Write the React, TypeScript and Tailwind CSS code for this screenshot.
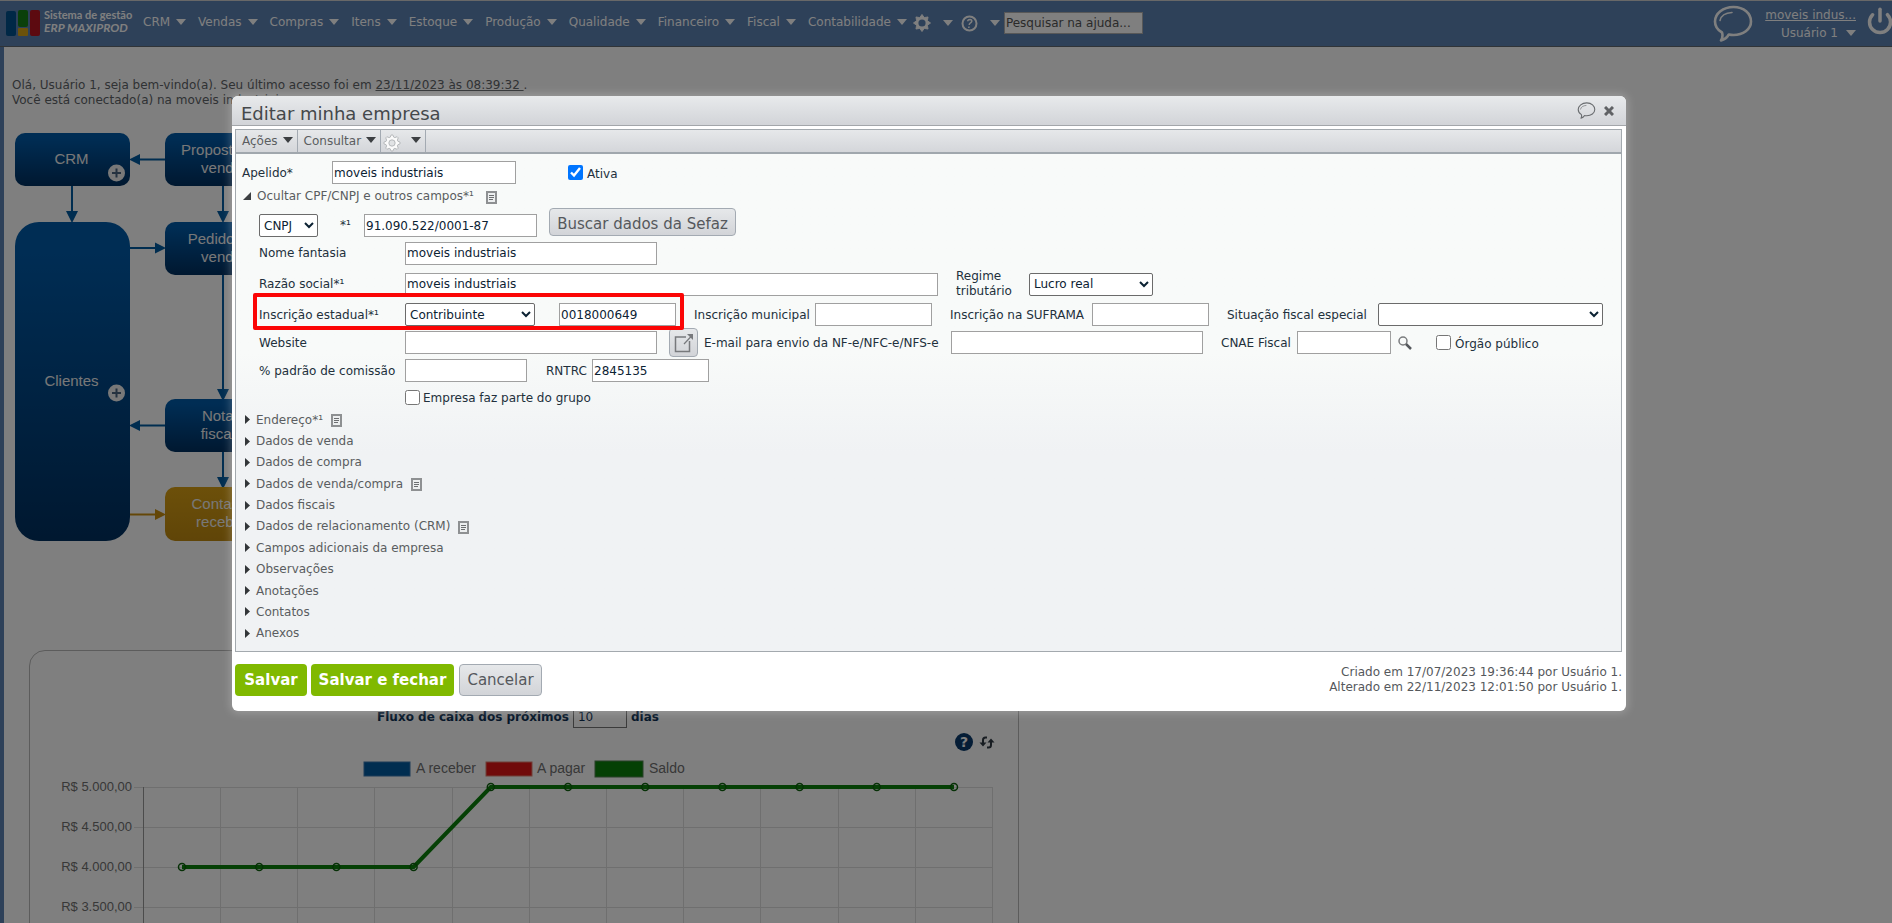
import type { ReactNode } from "react";
import { Power } from "lucide-react";

const menuItems = [
  "CRM",
  "Vendas",
  "Compras",
  "Itens",
  "Estoque",
  "Produção",
  "Qualidade",
  "Financeiro",
  "Fiscal",
  "Contabilidade",
];

const sections = [
  { title: "Endereço*¹", note: true },
  { title: "Dados de venda" },
  { title: "Dados de compra" },
  { title: "Dados de venda/compra", note: true },
  { title: "Dados fiscais" },
  { title: "Dados de relacionamento (CRM)", note: true },
  { title: "Campos adicionais da empresa" },
  { title: "Observações" },
  { title: "Anotações" },
  { title: "Contatos" },
  { title: "Anexos" },
];

const inputClass =
  "h-[23px] border border-[#a0a0a0] bg-white px-px text-xs text-[#0c2233] outline-none";
const selectClass =
  "h-[23px] rounded-xs border border-[#6b6b6b] bg-white text-xs text-[#0c2233]";
const grayButton =
  "rounded-sm border border-[#a3aab2] bg-linear-to-b from-[#e6e8ea] to-[#d2d4d8] text-[#55585c]";

const Caret = () => (
  <svg width="10" height="6" viewBox="0 0 10 6" fill="currentColor">
    <path d="M0 0h10L5 6z" />
  </svg>
);

const Bubble = ({ className, stroke }: { className: string; stroke: number }) => (
  <svg className={className} viewBox="0 0 40 37" fill="none" stroke="currentColor" strokeWidth={stroke} strokeLinejoin="round">
    <path d="M9 27.500C4.500 25 2 21 2 16.500C2 8.500 10 2 20.500 2S38 8.500 38 16.500S30 30 20.500 30C18.800 30 17.200 29.800 15.800 29.500C14 32.500 11.500 34.500 8 35.500C9.500 33 10 30.500 9 27.500Z" />
    <path d="M7 15.500C8 11 12.500 7.800 19 7.500" strokeWidth={stroke * 0.6} strokeLinecap="round" />
  </svg>
);

const gearPoints = (teeth: number, outer: number, inner: number) =>
  Array.from({ length: teeth * 4 }, (_, i) => {
    const r = i % 4 < 2 ? outer : inner;
    const angle = ((i - 0.5) / (teeth * 4)) * Math.PI * 2;
    return `${10 + r * Math.sin(angle)},${10 - r * Math.cos(angle)}`;
  }).join(" ");

const starPoints = (teeth: number, outer: number, inner: number) =>
  Array.from({ length: teeth * 2 }, (_, i) => {
    const r = i % 2 ? inner : outer;
    const angle = (i / (teeth * 2)) * Math.PI * 2;
    return `${10 + r * Math.sin(angle)},${10 - r * Math.cos(angle)}`;
  }).join(" ");

// solid eight-pointed gear of the top bar
const MenuGear = () => (
  <svg width="18" height="20" viewBox="0 0 20 20" fill="none" stroke="currentColor">
    <polygon points={starPoints(8, 9.5, 6.5)} fill="currentColor" strokeWidth="1" />
    <circle cx="10" cy="10" r="4" fill="#5c82b2" stroke="none" />
  </svg>
);

const ToolbarGear = () => (
  <svg className="mt-1 size-[18px]" viewBox="0 0 20 20" stroke="currentColor" strokeLinejoin="round">
    <polygon points={gearPoints(8, 9, 6.8)} fill="#fafafa" strokeWidth="1" />
    <circle cx="10" cy="10" r="3.500" fill="#e0e2e4" strokeWidth="1" />
  </svg>
);

const HelpIcon = () => (
  <svg width="17" height="17" viewBox="0 0 17 17" fill="none" stroke="currentColor">
    <circle cx="8.500" cy="8.500" r="7" strokeWidth="2" />
    <path d="M6.500 6.300Q7 4.500 9 4.500Q11 4.600 10.800 6.300Q10.500 7.500 9.200 8.200Q8.300 8.800 8.200 10M8 11.500L7.800 13" strokeWidth="1.500" />
  </svg>
);

const NoteIcon = () => (
  <svg width="11" height="13" viewBox="0 0 11 13" fill="none" stroke="#8e9092">
    <path d="M1 1h9v11h-9z" fill="#eceeef" strokeWidth="2" />
    <path d="M3 4.500h5M3 6.500h5M3 8.500h4" stroke="#6c6e70" />
  </svg>
);

const Logo = () => (
  <svg width="34" height="26" viewBox="0 0 34 26">
    <rect x="0" y="1" width="10" height="25" rx="2" fill="#00508c" />
    <rect x="12" y="0" width="10" height="17" rx="2" fill="#148014" />
    <rect x="12" y="18" width="10" height="8" rx="1" fill="#d9a514" />
    <rect x="24" y="0" width="10" height="26" rx="2" fill="#b81420" />
  </svg>
);

const TopBar = () => (
  <header className="flex h-[47px] items-start border-t border-b border-t-[#d0d0d0] border-b-[#606870] bg-[#5c82b2] text-xs text-white">
    <a href="#" className="mt-[9px] ml-1.5 flex w-[137px] gap-1">
      <Logo />
      <span className="-mt-0.5 font-['Lato',sans-serif] text-[11px] leading-[13px] font-bold">
        Sistema de gestão
        <br />
        <em className="text-xs leading-[13px]">ERP MAXIPROD</em>
      </span>
    </a>
    <nav className="mt-2.5 flex h-[22px] items-center gap-3">
      {menuItems.map((item) => (
        <button key={item} className="flex items-center gap-1.5">
          {item}
          <Caret />
        </button>
      ))}
    </nav>
    <button aria-label="Configurações" className="mt-[11px] ml-1.5 flex h-[22px] items-center gap-3">
      <MenuGear />
      <Caret />
    </button>
    <button aria-label="Ajuda" className="mt-[11px] ml-2 flex h-[22px] items-center gap-3">
      <HelpIcon />
      <Caret />
    </button>
    <input
      aria-label="Pesquisar na ajuda"
      placeholder="Pesquisar na ajuda..."
      className="mt-[11px] ml-1 h-[22px] w-[139px] border border-[#b0b0b0] bg-white px-px text-xs text-[#555] placeholder:text-[#555]"
    />
    <div className="ml-auto flex items-start">
      <button aria-label="Chat" className="mt-1 mr-3">
        <Bubble className="h-[37px] w-10" stroke={2.6} />
      </button>
      <div className="mt-[5px] text-right leading-[18px]">
        <a href="#" className="block underline">
          moveis indus...
        </a>
        <button className="inline-flex items-center gap-2">
          Usuário 1
          <Caret />
        </button>
      </div>
      <button aria-label="Sair" className="mt-1.5 -mr-0.5 ml-2.5">
        <Power size={28} strokeWidth={3} />
      </button>
    </div>
  </header>
);

const FlowBox = ({ x, y, w = 115, h = 53, r = 10, lines, fill = "url(#blue)", plus }: {
  x: number; y: number; w?: number; h?: number; r?: number; lines: string[]; fill?: string; plus?: number;
}) => (
  <g>
    <rect x={x} y={y} width={w} height={h} rx={r} fill={fill} />
    {lines.map((line, i) => (
      <text key={line} x={x + w / 2 - 1} y={y + h / 2 + 4 + (i - (lines.length - 1) / 2) * 18} textAnchor="middle" fill="#f0f0f0" fontSize="15">
        {line}
      </text>
    ))}
    {plus && (
      <g>
        <circle cx={x + 101.5} cy={plus} r="8.500" fill="#f0f0f0" />
        <path d={`M${x + 97} ${plus}h9M${x + 101.5} ${plus - 4.5}v9`} stroke="#4a6480" strokeWidth="2" />
      </g>
    )}
  </g>
);

const FlowDiagram = () => (
  <svg className="mt-[22px] block font-['Liberation_Sans',sans-serif]" width="280" height="415" viewBox="12 130 280 415">
    <defs>
      <linearGradient id="blue" x1="0" y1="0" x2="0" y2="1">
        <stop offset="0.100" stopColor="#005aa8" />
        <stop offset="1" stopColor="#003060" />
      </linearGradient>
      <linearGradient id="gold" x1="0" y1="0" x2="0" y2="1">
        <stop offset="0" stopColor="#d9a014" />
        <stop offset="1" stopColor="#c08a10" />
      </linearGradient>
    </defs>
    <g stroke="#005aa0" strokeWidth="2">
      <path d="M72 186v28M223 186v28M223 274v118M223 452v28M165 159.500h-28M130 248h28M165 425.500h-28" />
      <path d="M130 514.500h28" stroke="#c98f10" />
    </g>
    <g fill="#005aa0">
      <path d="M66 211h12l-6 12zM217 211h12l-6 12zM217 389h12l-6 12zM217 477h12l-6 12z" />
      <path d="M140 154v11l-11-5.500zM155 242.500v11l11-5.500zM140 420v11l-11-5.500z" />
      <path d="M155 509v11l11-5.500z" fill="#c98f10" />
    </g>
    <FlowBox x={15} y={133} lines={["CRM"]} plus={173} />
    <FlowBox x={15} y={222} h={319} r={24} lines={["Clientes"]} plus={393} />
    <FlowBox x={165} y={133} lines={["Proposta de", "venda"]} />
    <FlowBox x={165} y={222} lines={["Pedido de", "venda"]} />
    <FlowBox x={165} y={399} lines={["Notas", "fiscais"]} />
    <FlowBox x={165} y={487} h={54} lines={["Contas a", "receber"]} fill="url(#gold)" />
  </svg>
);

const balance = [4000, 4000, 4000, 4000, 5000, 5000, 5000, 5000, 5000, 5000, 5000];
const yLabels = ["R$ 5.000,00", "R$ 4.500,00", "R$ 4.000,00", "R$ 3.500,00"];
const pointX = (i: number) => 182 + i * 77.2;
const pointY = (value: number) => 787 + (5000 - value) * 0.08;

const CashChart = () => (
  <svg className="block font-['Liberation_Sans',sans-serif]" width="988" height="200" viewBox="30 755 988 200" fontSize="14" fill="#707070">
    <rect x="364" y="762" width="46" height="14" fill="#005aa0" stroke="#3a78b0" />
    <text x="416" y="773">A receber</text>
    <rect x="486" y="762" width="46" height="14" fill="#e01414" stroke="#e08070" />
    <text x="537" y="773">A pagar</text>
    <rect x="595" y="761" width="48" height="16" fill="#088008" stroke="#508050" />
    <text x="649" y="773">Saldo</text>
    <g stroke="#dedede">
      {Array.from({ length: 11 }, (_, i) => (
        <path key={i} d={`M${Math.round(220 + i * 77.2) + 0.5} 787V955`} />
      ))}
      {yLabels.map((label, i) => (
        <path key={label} d={`M134 ${787 + i * 40}.500H992`} />
      ))}
    </g>
    <path d="M143.500 787V955" stroke="#999" />
    {yLabels.map((label, i) => (
      <text key={label} x="132" y={791 + i * 40} textAnchor="end" fontSize="13">
        {label}
      </text>
    ))}
    <polyline points={balance.map((v, i) => `${pointX(i)},${pointY(v)}`).join(" ")} fill="none" stroke="#0a800a" strokeWidth="4" />
    {balance.map((v, i) => (
      <circle key={i} cx={pointX(i)} cy={pointY(v)} r="3.500" fill="none" stroke="#0c600c" strokeWidth="1.500" />
    ))}
  </svg>
);

const Dashboard = () => (
  <main className="border-l-4 border-[#5c82b2] bg-white pt-[31px] pl-2 text-xs leading-[15px] text-[#606468]">
    <p>
      Olá, Usuário 1, seja bem-vindo(a). Seu último acesso foi em{" "}
      <a href="#" className="underline">23/11/2023 às 08:39:32&nbsp;</a>.
    </p>
    <p>Você está conectado(a) na moveis industriais.</p>
    <FlowDiagram />
    <section className="mt-[105px] ml-[17px] w-[990px] rounded-2xl border border-[#b8b8b8]">
      <div className="mt-[55px] flex h-[22px] items-center justify-center gap-1 pr-3 font-bold text-[#0a2c50]">
        <label htmlFor="dias">Fluxo de caixa dos próximos</label>
        <input id="dias" defaultValue="10" className="h-[22px] w-[54px] border border-[#777] px-1 font-normal" />
        dias
      </div>
      <div className="mt-[5px] flex h-[18px] items-center justify-end gap-1.5 pr-[23px] text-[#0a2c50]">
        <button aria-label="Ajuda do gráfico" className="size-[18px] rounded-full bg-[#0a3a6c] text-sm leading-[18px] font-bold text-white">
          ?
        </button>
        <button aria-label="Atualizar">
          <svg width="16" height="13" viewBox="0 0 16 13" fill="none" stroke="#303a44" strokeWidth="2">
            <path d="M8 1.500H6.500Q4 1.500 4 4V8M8 11.500H9.500Q12 11.500 12 9V5" />
            <path d="M0.500 6.500h7L4 10.500zM8.500 6.500h7L12 2.500z" fill="#303a44" stroke="none" />
          </svg>
        </button>
      </div>
      <div className="mt-1">
        <CashChart />
      </div>
    </section>
  </main>
);

const Field = ({ id, label, labelClass = "", className = "", value }: {
  id: string; label: string; labelClass?: string; className?: string; value?: string;
}) => (
  <>
    <label htmlFor={id} className={`shrink-0 ${labelClass}`}>
      {label}
    </label>
    <input id={id} defaultValue={value} className={`${inputClass} ${className}`} />
  </>
);

const ToolbarButton = ({ children }: { children: ReactNode }) => (
  <button className="flex items-center gap-[5px] border-r border-[#a3aab2] pr-1 pl-1.5">
    {children}
    <span className="pb-0.5 text-[#3c3f42]">
      <Caret />
    </span>
  </button>
);

const CompanyForm = () => (
  <div className="bg-linear-to-b from-[#f8faf9] from-40% to-[#f0f2f4] to-60% pt-[7px] pb-[7px] text-[#22303c]">
    <div className="flex h-[23px] items-center pl-1.5">
      <Field id="apelido" label="Apelido*" labelClass="w-[90px]" className="w-[184px]" value="moveis industriais" />
      <input id="ativa" type="checkbox" defaultChecked className="ml-[52px] size-[15px]" />
      <label htmlFor="ativa" className="ml-1 pt-0.5">Ativa</label>
    </div>

    <div className="flex h-6 items-center pl-[7px] text-[#5a5d60]">
      <button className="flex items-center gap-1.5">
        <svg width="8" height="8" viewBox="0 0 8 8" fill="#3c3f42">
          <path d="M8 0v8h-8z" />
        </svg>
        Ocultar CPF/CNPJ e outros campos*¹
      </button>
      <span className="ml-3 pt-0.5">
        <NoteIcon />
      </span>
    </div>

    <div className="pr-[18px] pl-[23px]">
      <div className="flex h-[29px] items-end">
        <select aria-label="Tipo de documento" defaultValue="CNPJ" className={`${selectClass} w-[59px]`}>
          <option>CNPJ</option>
          <option>CPF</option>
        </select>
        <label htmlFor="cnpj" className="w-[46px] self-end pb-1 pl-[22px]">*¹</label>
        <input id="cnpj" defaultValue="91.090.522/0001-87" className={`${inputClass} w-[173px]`} />
        <button className={`${grayButton} ml-3 h-7 w-[187px] self-start pt-1 text-[15px] leading-5`}>Buscar dados da Sefaz</button>
      </div>

      <div className="mt-[5px] flex h-[22px] items-center">
        <Field id="fantasia" label="Nome fantasia" labelClass="w-[146px]" className="w-[252px]" value="moveis industriais" />
      </div>

      <div className="mt-[5px] flex h-[30px] items-center">
        <Field id="razao" label="Razão social*¹" labelClass="w-[146px]" className="w-[533px]" value="moveis industriais" />
        <label htmlFor="regime" className="ml-[18px] w-[73px] leading-[15px]">
          Regime
          <br />
          tributário
        </label>
        <select id="regime" defaultValue="Lucro real" className={`${selectClass} w-[124px]`}>
          <option>Lucro real</option>
          <option>Simples nacional</option>
        </select>
      </div>

      <div className="mt-1 flex h-[23px] items-center">
        <div className="relative flex items-center">
          <label htmlFor="contribuinte" className="w-[146px]">Inscrição estadual*¹</label>
          <select id="contribuinte" defaultValue="Contribuinte" className={`${selectClass} w-[130px]`}>
            <option>Contribuinte</option>
            <option>Isento</option>
          </select>
          <input aria-label="Número da inscrição estadual" defaultValue="0018000649" className={`${inputClass} ml-6 w-[117px]`} />
          <div className="pointer-events-none absolute -top-2.5 -right-2 -bottom-1 -left-1.5 rounded-xs border-4 border-[#fb0505]" />
        </div>
        <Field id="municipal" label="Inscrição municipal" labelClass="ml-[18px] w-[121px]" className="w-[117px]" />
        <Field id="suframa" label="Inscrição na SUFRAMA" labelClass="ml-[18px] w-[142px]" className="w-[117px]" />
        <label htmlFor="situacao" className="ml-[18px] w-[151px] shrink-0">Situação fiscal especial</label>
        <select id="situacao" className={`${selectClass} min-w-0 flex-1`}>
          <option></option>
        </select>
      </div>

      <div className="mt-0.5 flex h-[29px] items-center">
        <Field id="website" label="Website" labelClass="w-[146px]" className="w-[252px]" />
        <button aria-label="Abrir website" className={`${grayButton} ml-3 flex h-[29px] w-[29px] items-center justify-center`}>
          <svg width="20" height="20" viewBox="0 0 20 20" fill="none" stroke="#77797c" strokeWidth="1.500">
            <path d="M12 4H1.500v14.500H15.500V8" />
            <path d="M10 11L18.500 2" strokeWidth="1.200" />
            <path d="M13 1h6v6z" fill="#77797c" stroke="none" />
          </svg>
        </button>
        <Field id="email" label="E-mail para envio da NF-e/NFC-e/NFS-e" labelClass="ml-1.5 w-[247px] whitespace-nowrap" className="w-[252px]" />
        <Field id="cnae" label="CNAE Fiscal" labelClass="ml-[18px] w-[76px]" className="w-[94px]" />
        <button aria-label="Procurar CNAE" className="ml-[7px]">
          <svg width="14" height="14" viewBox="0 0 14 14" fill="none" stroke="#55585c">
            <circle cx="5" cy="5" r="4" strokeWidth="1.500" stroke="#7a7c7e" />
            <path d="M8 8l5 5" strokeWidth="2.500" />
          </svg>
        </button>
        <input id="orgao" type="checkbox" className="ml-6 size-[15px]" />
        <label htmlFor="orgao" className="ml-1 pt-0.5">Órgão público</label>
      </div>

      <div className="mt-0.5 flex items-center">
        <Field id="comissao" label="% padrão de comissão" labelClass="w-[146px]" className="w-[122px]" />
        <Field id="rntrc" label="RNTRC" labelClass="ml-[19px] w-[46px]" className="w-[117px]" value="2845135" />
      </div>

      <div className="mt-[7px] flex h-4 items-center pl-[146px]">
        <input id="grupo" type="checkbox" className="size-[15px]" />
        <label htmlFor="grupo" className="ml-[3px] pt-0.5">Empresa faz parte do grupo</label>
      </div>
    </div>

    <ul className="mt-1 flex h-[235px] flex-col pl-[9px] text-[#5a5d60]">
      {sections.map((section) => (
        <li key={section.title} className="flex flex-1 items-center">
          <button className="flex items-center gap-1.5">
            <svg width="5" height="9" viewBox="0 0 5 9" fill="#333639">
              <path d="M0 0l5 4.500L0 9z" />
            </svg>
            {section.title}
          </button>
          {section.note && (
            <span className="ml-2 pt-0.5">
              <NoteIcon />
            </span>
          )}
        </li>
      ))}
    </ul>
  </div>
);

const CompanyDialog = () => (
  <div role="dialog" aria-labelledby="dialog-title" className="w-full self-start rounded-md bg-white shadow-[0_0_8px_2px_rgba(255,255,255,0.22)]">
    <div className="flex h-[30px] items-center rounded-t-md border-b border-[#a3a6aa] bg-linear-to-b from-[#e8eaec] to-[#d2d4d8] pr-3 pl-[9px]">
      <h1 id="dialog-title" className="mt-1.5 text-lg leading-6 text-[#45484b]">Editar minha empresa</h1>
      <button aria-label="Comentários" className="ml-auto text-[#6a6d70]">
        <Bubble className="h-[17px] w-[19px]" stroke={2.4} />
      </button>
      <button aria-label="Fechar" className="ml-2">
        <svg width="10" height="10" viewBox="0 0 10 10" stroke="#606265" strokeWidth="3">
          <path d="M1 1l8 8M9 1l-8 8" />
        </svg>
      </button>
    </div>
    <div className="mt-[3px] mr-1 ml-[3px] border border-[#a3a9ae]">
      <div className="flex h-6 border-b-2 border-[#a0a7ad] bg-linear-to-b from-[#e6e8ea] to-[#d4d6da] text-[#5a5d60]">
        <ToolbarButton>Ações</ToolbarButton>
        <ToolbarButton>Consultar</ToolbarButton>
        <button aria-label="Opções" className="flex items-center gap-2.5 border-r border-[#a3aab2] pr-1 pl-0.5 text-[#b0b3b6]">
          <ToolbarGear />
          <span className="pb-0.5 text-[#3c3f42]">
            <Caret />
          </span>
        </button>
      </div>
      <CompanyForm />
    </div>
    <div className="mt-3 flex items-start gap-1 pr-1 pb-[15px] pl-[3px]">
      <button className="h-8 w-[72px] rounded-sm bg-[#80b900] pt-0.5 text-[15px] font-bold text-white">Salvar</button>
      <button className="h-8 w-[143px] rounded-sm bg-[#80b900] pt-0.5 text-[15px] font-bold text-white">Salvar e fechar</button>
      <button className={`${grayButton} ml-px h-8 w-[83px] pt-0.5 text-[15px]`}>Cancelar</button>
      <p className="ml-auto pt-px text-right leading-[15px] text-[#55585c]">
        Criado em 17/07/2023 19:36:44 por Usuário 1.
        <br />
        Alterado em 22/11/2023 12:01:50 por Usuário 1.
      </p>
    </div>
  </div>
);

const App = () => {
  return (
    <div className="relative h-screen overflow-hidden bg-white font-['DejaVu_Sans',sans-serif] text-xs">
      <TopBar />
      <Dashboard />
      <div className="absolute inset-0 flex bg-black/50 pt-24 pr-[266px] pl-[232px]">
        <CompanyDialog />
      </div>
    </div>
  );
};

export default App;
